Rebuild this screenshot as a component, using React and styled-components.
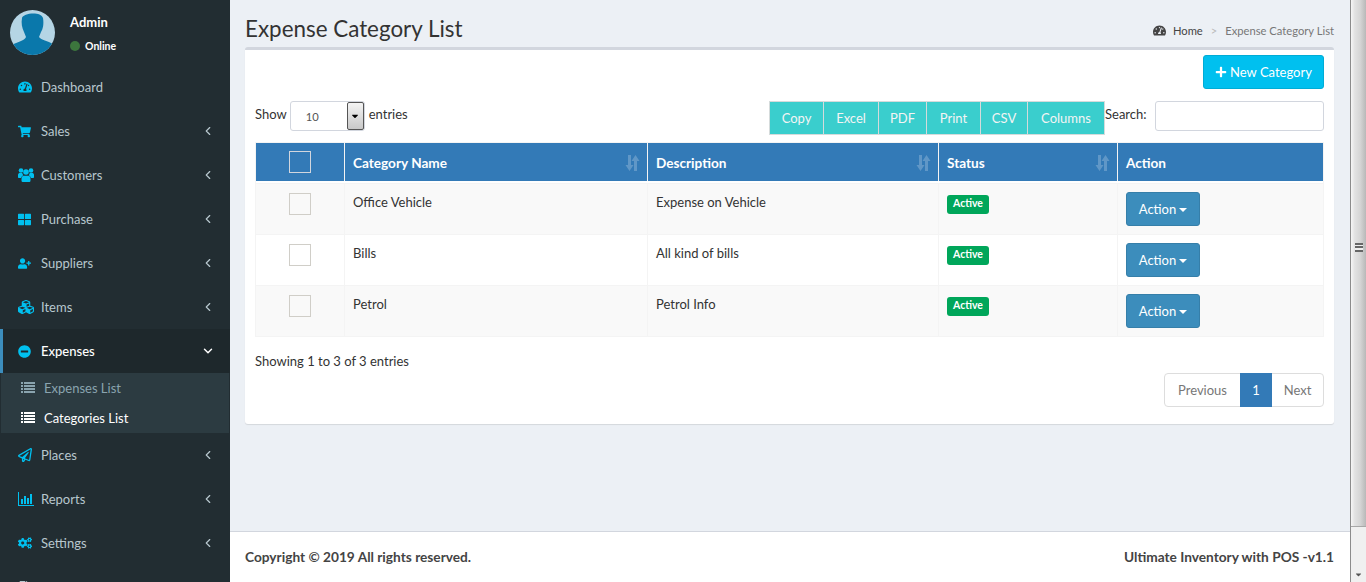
import styled, { createGlobalStyle } from "styled-components";
import {
  FaTachometerAlt,
  FaShoppingCart,
  FaThLarge,
  FaUserPlus,
  FaCubes,
  FaMinusCircle,
  FaRegPaperPlane,
  FaCogs,
  FaPlus,
  FaCaretDown,
  FaFileAlt,
} from "react-icons/fa";
import { ChevronLeft, ChevronDown } from "lucide-react";

const Global = createGlobalStyle`
  html, body { margin: 0; padding: 0; height: 100%; overflow: hidden; }
  body {
    font-family: "Lato", "Liberation Sans", sans-serif;
    font-size: 13px;
    color: #333;
    background: #ecf0f5;
  }
  * { box-sizing: border-box; }
`;

const Page = styled.div`
  display: flex;
  width: 1366px;
  height: 582px;
  overflow: hidden;
`;

const Sidebar = styled.aside`
  width: 230px;
  flex: none;
  background: #222d32;
  overflow: hidden;
`;

const UserPanel = styled.div`
  display: flex;
  height: 65px;
  padding: 10px 0 0 10px;
`;

const Avatar = styled.svg`
  width: 45px;
  height: 45px;
  border-radius: 50%;
  flex: none;
`;

const UserInfo = styled.div`
  margin-left: 15px;
  padding-top: 5px;
  color: #fff;
`;

const UserName = styled.div`
  font-weight: 700;
  font-size: 13px;
  line-height: 15px;
`;

const UserStatus = styled.div`
  display: flex;
  align-items: center;
  gap: 5px;
  margin-top: 9px;
  font-size: 10.5px;
  font-weight: 700;
  line-height: 14px;
`;

const Dot = styled.span`
  width: 10px;
  height: 10px;
  border-radius: 50%;
  background: #3c763d;
`;

const MenuItem = styled.div`
  display: flex;
  align-items: center;
  height: 44px;
  padding-left: ${(p) => (p.$active ? "15px" : "18px")};
  padding-right: 15px;
  color: ${(p) => (p.$active ? "#fff" : "#b8c7ce")};
  background: ${(p) => (p.$active ? "#1e282c" : "transparent")};
  border-left: ${(p) => (p.$active ? "3px solid #3c8dbc" : "none")};
  font-size: 13px;
  font-weight: ${(p) => (p.$active ? 500 : 400)};
`;

const MenuIcon = styled.span`
  display: flex;
  align-items: center;
  width: 23px;
  color: ${(p) => p.$color || "#00c0ef"};
  flex: none;
  svg {
    height: ${(p) => p.$h || 14}px;
    width: auto;
  }
`;

const MenuLabel = styled.span`
  flex: 1;
  padding-bottom: 1px;
`;

const Chevron = styled.span`
  display: flex;
  color: ${(p) => (p.$open ? "#fff" : "#b8c7ce")};
`;

const SubMenu = styled.div`
  margin: 0 1px;
  background: #2c3b41;
`;

const SubItem = styled.div`
  display: flex;
  align-items: center;
  height: 30px;
  padding-left: 20px;
  padding-bottom: 1px;
  font-size: 13px;
  color: ${(p) => (p.$active ? "#fff" : "#8aa4af")};
  svg {
    width: 14px;
    height: 11px;
    margin-right: 9px;
  }
`;

const Main = styled.div`
  display: flex;
  flex-direction: column;
  flex: 1;
  min-width: 0;
`;

const Content = styled.main`
  flex: 1;
  padding: 0 16px 0 15px;
`;

const ContentHeader = styled.div`
  display: flex;
  align-items: flex-end;
  justify-content: space-between;
  height: 47px;
  padding-bottom: 3px;
`;

const Title = styled.h1`
  margin: 0;
  font-size: 22.4px;
  font-weight: 400;
  line-height: 30px;
`;

const Crumbs = styled.div`
  display: flex;
  align-items: center;
  font-size: 11.2px;
  color: #444;
  margin-bottom: 7px;
  svg {
    font-size: 13px;
    margin-right: 7px;
  }
`;

const CrumbSep = styled.span`
  margin: 0 8px;
  color: #bbb;
`;

const CrumbCurrent = styled.span`
  color: #777;
`;

const Card = styled.section`
  background: #fff;
  border-top: 3px solid #d2d6de;
  border-radius: 3px;
  box-shadow: 0 1px 1px rgba(0, 0, 0, 0.1);
  height: 377px;
  padding: 5px 10px 0;
`;

const TopBar = styled.div`
  display: flex;
  justify-content: flex-end;
  height: 46px;
`;

const NewButton = styled.button`
  display: flex;
  align-items: center;
  gap: 3px;
  height: 34px;
  width: 121px;
  justify-content: center;
  background: #00c0ef;
  border: 1px solid #00acd6;
  border-radius: 3px;
  color: #fff;
  font: inherit;
  font-size: 13px;
  svg {
    font-size: 12px;
  }
`;

const Controls = styled.div`
  display: flex;
  justify-content: space-between;
  height: 41px;
`;

const LengthBox = styled.label`
  display: flex;
  align-items: flex-start;
  line-height: 26px;
`;

const FakeSelect = styled.div`
  position: relative;
  width: 75px;
  height: 30px;
  margin: 0 4px 0 3px;
  padding: 2px 0 0 15px;
  border: 1px solid #d2d6de;
  border-radius: 3px;
  color: #555;
  font-size: 11.2px;
`;

const SelectArrow = styled.span`
  position: absolute;
  top: 0;
  right: 0;
  display: flex;
  align-items: center;
  justify-content: center;
  width: 17px;
  height: 28px;
  border: 1px solid #555;
  border-radius: 2px;
  background: linear-gradient(#f4f4f4, #c8c8c8);
  color: #000;
  font-size: 10px;
`;

const ToolRight = styled.div`
  display: flex;
  align-items: flex-start;
`;

const ExportGroup = styled.div`
  display: flex;
`;

const ExportButton = styled.div`
  display: flex;
  align-items: center;
  justify-content: center;
  width: ${(p) => p.$w}px;
  height: 34px;
  margin-left: ${(p) => (p.$first ? 0 : -1)}px;
  background: #3acecd;
  border: 1px solid #d5dbdb;
  color: #f4f4f4;
  font-size: 13px;
`;

const SearchLabel = styled.span`
  width: 50px;
  line-height: 26px;
`;

const SearchInput = styled.div`
  width: 169px;
  height: 30px;
  border: 1px solid #d2d6de;
  border-radius: 3px;
`;

const Table = styled.table`
  width: 1068px;
  border-collapse: collapse;
  table-layout: fixed;
  border: 1px solid #f4f4f4;
`;

const Th = styled.th`
  position: relative;
  height: 38px;
  padding: 3px 8px 0;
  background: #337ab7;
  border-right: 1px solid #f4f4f4;
  color: #fff;
  font-size: 13.6px;
  font-weight: 700;
  text-align: left;
  &:last-child {
    border-right: none;
  }
`;

const HeadCheck = styled.div`
  display: flex;
  justify-content: center;
  margin-top: -3px;
`;

const HeadRule = styled.tr`
  height: 3px;
  background: #f4f4f4;
`;

const SortIcon = styled.svg`
  position: absolute;
  right: 7px;
  top: 12px;
  width: 15px;
  height: 16px;
  opacity: 0.22;
`;

const Tr = styled.tr`
  background: ${(p) => (p.$odd ? "#f9f9f9" : "#fff")};
`;

const Td = styled.td`
  height: 51px;
  padding: 9px 8px 0;
  vertical-align: top;
  border: 1px solid #f4f4f4;
  line-height: 18px;
`;

const CheckCell = styled.div`
  display: flex;
  justify-content: center;
`;

const CheckBox = styled.span`
  display: block;
  width: 22px;
  height: 22px;
  border: 1px solid ${(p) => (p.$head ? "#d2d6de" : "#d0cec8")};
`;

const Badge = styled.span`
  display: inline-block;
  height: 19px;
  padding: 0 6px;
  margin-top: 2px;
  background: #00a65a;
  border-radius: 3px;
  color: #fff;
  font-size: 10.5px;
  font-weight: 700;
  line-height: 16px;
  vertical-align: top;
`;

const ActionButton = styled.button`
  display: inline-flex;
  align-items: center;
  justify-content: center;
  gap: 3px;
  width: 74px;
  height: 34px;
  margin-top: -1px;
  background: #3c8dbc;
  border: 1px solid #367fa9;
  border-radius: 3px;
  color: #fff;
  font: inherit;
  font-size: 13px;
`;

const Caret = styled.span`
  width: 0;
  height: 0;
  margin-top: 2px;
  border-top: 4px solid #fff;
  border-left: 4px solid transparent;
  border-right: 4px solid transparent;
`;

const Info = styled.div`
  margin-top: 14px;
  line-height: 20px;
`;

const PagerRow = styled.div`
  display: flex;
  justify-content: flex-end;
  margin-top: 2px;
`;

const Pager = styled.div`
  display: flex;
  height: 34px;
  border: 1px solid #ddd;
  border-radius: 4px;
`;

const PageLink = styled.span`
  display: flex;
  align-items: center;
  justify-content: center;
  width: ${(p) => p.$w}px;
  color: ${(p) => (p.$active ? "#fff" : "#777")};
  background: ${(p) => (p.$active ? "#337ab7" : "transparent")};
  margin: ${(p) => (p.$active ? "-1px 0" : 0)};
`;

const Footer = styled.footer`
  display: flex;
  align-items: center;
  justify-content: space-between;
  height: 51px;
  padding: 0 16px 2px 15px;
  background: #fff;
  border-top: 1px solid #d2d6de;
  color: #444;
  font-size: 13.7px;
  font-weight: 700;
`;

const Scrollbar = styled.div`
  display: flex;
  flex-direction: column;
  width: 16px;
  flex: none;
  background: #f0f0f0;
  border-left: 1px solid #8c8c8c;
`;

const ScrollThumb = styled.div`
  display: flex;
  justify-content: center;
  height: 527px;
  padding-top: 243px;
  background: linear-gradient(90deg, #f6f6f6, #e2e2e2 25%, #d6d6d6 60%, #b8b8b8);
  border-bottom: 1px solid #a8a8a8;
`;

const Grip = styled.div`
  width: 8px;
  height: 9px;
  background: repeating-linear-gradient(#666 0 2px, #eee 2px 3.5px);
`;

const ScrollArrow = styled.div`
  display: flex;
  justify-content: center;
  align-items: flex-end;
  flex: 1;
  padding-bottom: 3px;
  color: #555;
  font-size: 9px;
`;

const ListIcon = () => (
  <svg viewBox="0 0 14 11" fill="currentColor">
    <path d="M0 0h2v2H0zM3 0h11v2H3zM0 3h2v2H0zM3 3h11v2H3zM0 6h2v2H0zM3 6h11v2H3zM0 9h2v2H0zM3 9h11v2H3z" />
  </svg>
);

const BarsIcon = () => (
  <svg viewBox="0 0 16 14" fill="currentColor">
    <path d="M0 0h1v13h15v1H0z" />
    <path d="M3 7h2v5H3zM6 4h2v8H6zM9 6h2v6H9zM12 2h2v10h-2z" />
  </svg>
);

const UsersIcon = () => (
  <svg viewBox="0 0 16 14" fill="currentColor">
    <circle cx="3" cy="2.5" r="2.3" />
    <circle cx="13" cy="2.5" r="2.3" />
    <circle cx="8" cy="4" r="2.8" />
    <path d="M0 9V7c0-1.5 1-2 2-2h2.2c.2 1 .7 1.8 1.3 2.3C4.2 8 3.3 8.8 3.2 10H1c-.6 0-1-.4-1-1z" />
    <path d="M16 9V7c0-1.5-1-2-2-2h-2.2c-.2 1-.7 1.8-1.3 2.3 1.3.7 2.2 1.5 2.3 2.7H15c.6 0 1-.4 1-1z" />
    <path d="M3.5 12.5V11c0-2 1-3.2 2.5-3.2h4c1.5 0 2.5 1.2 2.5 3.2v1.5c0 1-.7 1.5-1.5 1.5H5c-.8 0-1.5-.5-1.5-1.5z" />
  </svg>
);

const menuTop = [
  ["Dashboard", <FaTachometerAlt />, false, 14],
  ["Sales", <FaShoppingCart />, true, 13],
  ["Customers", <UsersIcon />, true, 14],
  ["Purchase", <FaThLarge />, true, 13],
  ["Suppliers", <FaUserPlus />, true, 13],
  ["Items", <FaCubes />, true, 16],
];

const menuBottom = [
  ["Places", <FaRegPaperPlane />, 14],
  ["Reports", <BarsIcon />, 14],
  ["Settings", <FaCogs />, 14],
];

const exportsList = [
  ["Copy", 55],
  ["Excel", 56],
  ["PDF", 49],
  ["Print", 55],
  ["CSV", 48],
  ["Columns", 78],
];

const rows = [
  ["Office Vehicle", "Expense on Vehicle"],
  ["Bills", "All kind of bills"],
  ["Petrol", "Petrol Info"],
];

const Sort = () => (
  <SortIcon viewBox="0 0 15 16" fill="#fff">
    <path d="M3 0h3v10h2.5L4.5 16 .5 10H3z" />
    <path d="M10.5 0l4 6H12v10H9V6H6.5z" />
  </SortIcon>
);

const App = () => {
  return (
    <Page>
      <Global />
      <Sidebar>
        <UserPanel>
          <Avatar viewBox="0 0 45 45">
            <rect width="45" height="45" fill="#b5d5e5" />
            <path
              d="M12 8C13 3 31 1 33 8c1 6 0 11-2 14l-2 5c2 3 9 4 14 7l2 11H0V36c6-4 15-5 16-9l-2-5c-2-4-3-9-2-14z"
              fill="#0a78ab"
            />
          </Avatar>
          <UserInfo>
            <UserName>Admin</UserName>
            <UserStatus>
              <Dot />
              Online
            </UserStatus>
          </UserInfo>
        </UserPanel>
        {menuTop.map(([label, icon, hasChevron, h]) => (
          <MenuItem key={label}>
            <MenuIcon $h={h}>{icon}</MenuIcon>
            <MenuLabel>{label}</MenuLabel>
            {hasChevron && (
              <Chevron>
                <ChevronLeft size={14} strokeWidth={2} />
              </Chevron>
            )}
          </MenuItem>
        ))}
        <MenuItem $active>
          <MenuIcon $h={13}>
            <FaMinusCircle />
          </MenuIcon>
          <MenuLabel>Expenses</MenuLabel>
          <Chevron $open>
            <ChevronDown size={14} strokeWidth={2.5} />
          </Chevron>
        </MenuItem>
        <SubMenu>
          <SubItem>
            <ListIcon />
            Expenses List
          </SubItem>
          <SubItem $active>
            <ListIcon />
            Categories List
          </SubItem>
        </SubMenu>
        {menuBottom.map(([label, icon, h]) => (
          <MenuItem key={label}>
            <MenuIcon $h={h}>{icon}</MenuIcon>
            <MenuLabel>{label}</MenuLabel>
            <Chevron>
              <ChevronLeft size={14} strokeWidth={2} />
            </Chevron>
          </MenuItem>
        ))}
        <MenuItem>
          <MenuIcon $h={13} $color="#b8c7ce">
            <FaFileAlt />
          </MenuIcon>
        </MenuItem>
      </Sidebar>
      <Main>
        <Content>
          <ContentHeader>
            <Title>Expense Category List</Title>
            <Crumbs>
              <FaTachometerAlt />
              Home
              <CrumbSep>&gt;</CrumbSep>
              <CrumbCurrent>Expense Category List</CrumbCurrent>
            </Crumbs>
          </ContentHeader>
          <Card>
            <TopBar>
              <NewButton>
                <FaPlus />
                New Category
              </NewButton>
            </TopBar>
            <Controls>
              <LengthBox>
                Show
                <FakeSelect>
                  10
                  <SelectArrow>
                    <FaCaretDown />
                  </SelectArrow>
                </FakeSelect>
                entries
              </LengthBox>
              <ToolRight>
                <ExportGroup>
                  {exportsList.map(([label, w], i) => (
                    <ExportButton key={label} $w={w} $first={i === 0}>
                      {label}
                    </ExportButton>
                  ))}
                </ExportGroup>
                <SearchLabel>Search:</SearchLabel>
                <SearchInput />
              </ToolRight>
            </Controls>
            <Table>
              <colgroup>
                <col width="89" />
                <col width="303" />
                <col width="291" />
                <col width="179" />
                <col width="206" />
              </colgroup>
              <thead>
                <tr>
                  <Th>
                    <HeadCheck>
                      <CheckBox $head />
                    </HeadCheck>
                  </Th>
                  <Th>
                    Category Name
                    <Sort />
                  </Th>
                  <Th>
                    Description
                    <Sort />
                  </Th>
                  <Th>
                    Status
                    <Sort />
                  </Th>
                  <Th>Action</Th>
                </tr>
                <HeadRule />
              </thead>
              <tbody>
                {rows.map(([name, desc], i) => (
                  <Tr key={name} $odd={i % 2 === 0}>
                    <Td>
                      <CheckCell>
                        <CheckBox />
                      </CheckCell>
                    </Td>
                    <Td>{name}</Td>
                    <Td>{desc}</Td>
                    <Td>
                      <Badge>Active</Badge>
                    </Td>
                    <Td>
                      <ActionButton>
                        Action
                        <Caret />
                      </ActionButton>
                    </Td>
                  </Tr>
                ))}
              </tbody>
            </Table>
            <Info>Showing 1 to 3 of 3 entries</Info>
            <PagerRow>
              <Pager>
                <PageLink $w={75}>Previous</PageLink>
                <PageLink $w={32} $active>
                  1
                </PageLink>
                <PageLink $w={51}>Next</PageLink>
              </Pager>
            </PagerRow>
          </Card>
        </Content>
        <Footer>
          <span>Copyright © 2019 All rights reserved.</span>
          <span>Ultimate Inventory with POS -v1.1</span>
        </Footer>
      </Main>
      <Scrollbar>
        <ScrollThumb>
          <Grip />
        </ScrollThumb>
        <ScrollArrow>
          <FaCaretDown />
        </ScrollArrow>
      </Scrollbar>
    </Page>
  );
};

export default App;
